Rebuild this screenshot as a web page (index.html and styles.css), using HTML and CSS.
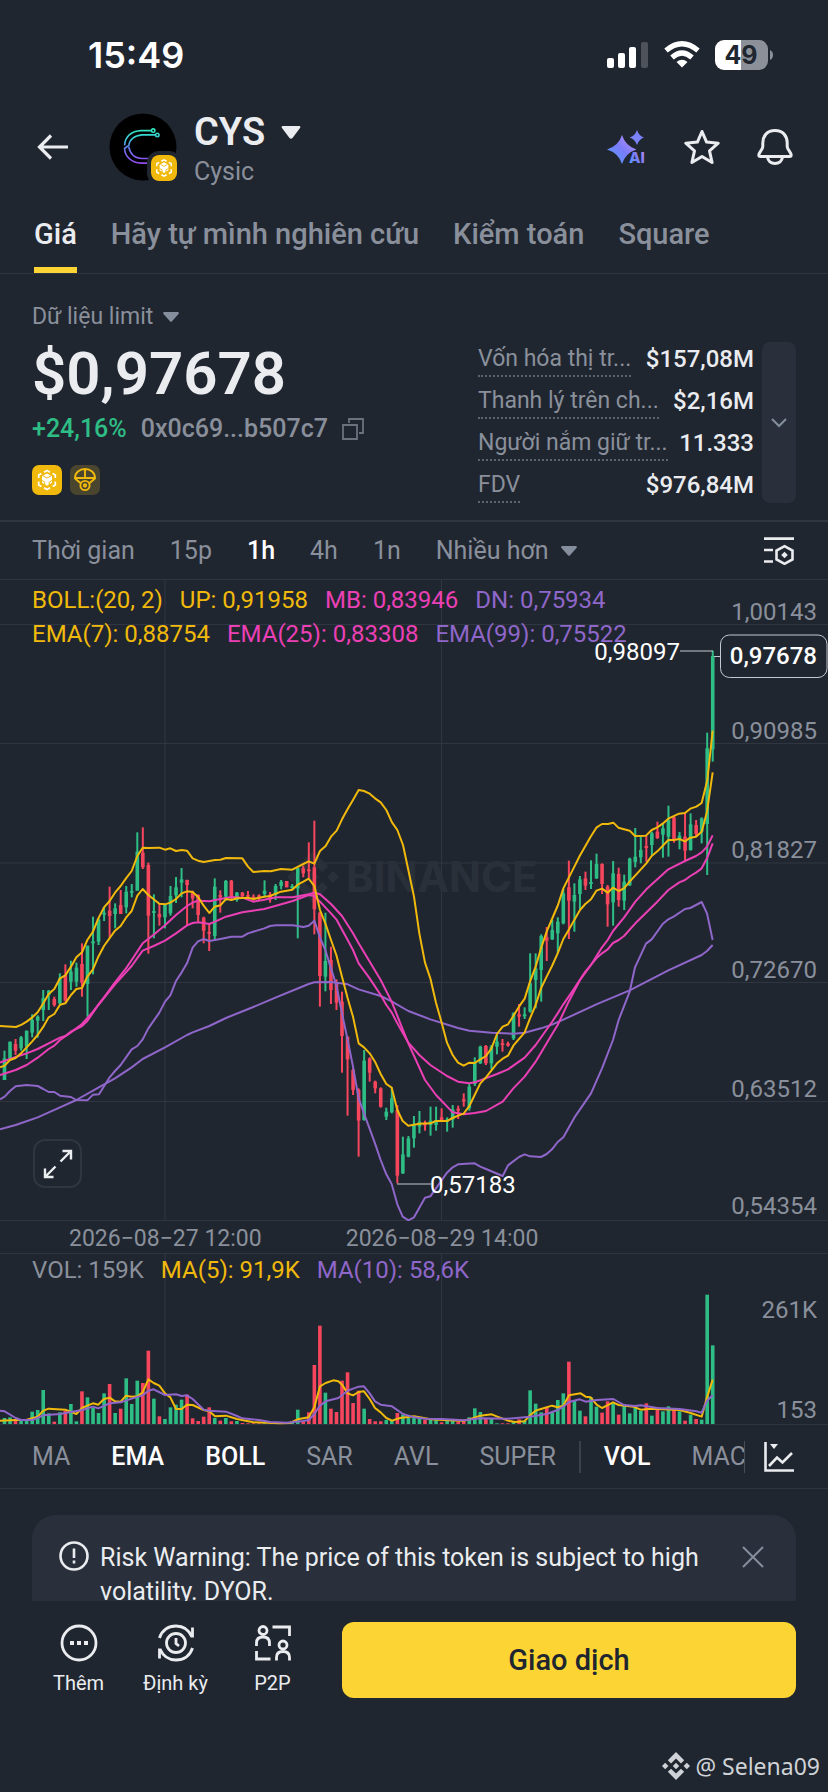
FILE: index.html
```html
<!DOCTYPE html>
<html lang="vi">
<head>
  <meta charset="UTF-8" />
  <meta name="viewport" content="width=device-width, initial-scale=1" />
  <title>CYS - Cysic</title>
  <link rel="stylesheet" href="styles.css">
</head>
<body>
  <!-- shared icon shapes -->
  <svg class="defs" aria-hidden="true">
    <symbol id="bnb" viewBox="0 0 30 30">
      <rect width="30" height="30" rx="7" fill="#f0b90b" />
      <path d="M12 7.200 15 5.500l3 1.700M20.600 8.500l2.700 1.600v3M23.300 16.500v3.400l-2.700 1.600M18 22.800l-3 1.700-3-1.700M9.400 21.500l-2.700-1.600v-3.400M6.700 13.100v-3l2.700-1.600" fill="none" stroke="#fff" stroke-width="1.700" />
      <path d="M10 11.200 15 8.400l5 2.800v6.500l-5 3-5-3z" fill="#fff" />
      <path d="M11 10.800l4 2.300 4-2.300M10 15.500l2.800 1.600v3.200M20 15.500l-2.800 1.600v3.200" fill="none" stroke="#f0b90b" stroke-width="1" />
    </symbol>
    <symbol id="binance" viewBox="0 0 48 48">
      <path d="M24 0 38 14l-5.500 5.500L24 11l-8.500 8.500L10 14zM24 48 10 34l5.500-5.500L24 37l8.500-8.500L38 34zM24 18.500l5.500 5.500-5.500 5.500-5.500-5.500zM5.500 18.500 11 24l-5.500 5.500L0 24zM42.500 18.500 48 24l-5.500 5.500L37 24z" fill="currentColor" />
    </symbol>
  </svg>

  <div class="status-bar">
    <time>15:49</time>
    <div class="status-icons">
      <svg width="42" height="28" viewBox="0 0 42 28" fill="#fff">
        <rect x="0" y="17" width="7" height="10" rx="2" />
        <rect x="11" y="12" width="7" height="15" rx="2" />
        <rect x="22" y="6" width="7" height="21" rx="2" />
        <rect x="34" y="1" width="7" height="26" rx="2" fill="#4d525b" />
      </svg>
      <svg width="36" height="28" viewBox="0 0 36 28" fill="none" stroke="#fff" stroke-width="5.200">
        <path d="M2 9.500Q18-4 34 9.500" />
        <path d="M8 16.500Q18 7.500 28 16.500" />
        <path d="M12.500 21Q18 16.500 23.500 21L18 26.500z" fill="#fff" stroke="none" />
      </svg>
      <svg width="58" height="30" viewBox="0 0 58 30">
        <path d="M9 0h17v30H9a9 9 0 0 1-9-9V9a9 9 0 0 1 9-9z" fill="#fff" />
        <path d="M26 0h18a9 9 0 0 1 9 9v12a9 9 0 0 1-9 9H26z" fill="#8b9099" />
        <path d="M55 10q3 1.500 3 5t-3 5z" fill="#8b9099" />
        <text x="26" y="24" class="battery-text">49</text>
      </svg>
    </div>
  </div>

  <header class="top">
    <button class="icon-btn" aria-label="Quay lại">
      <svg width="32" height="26" viewBox="0 0 32 26" fill="none" stroke="#eaecef" stroke-width="3.200">
        <path d="M32 13H3M15 1.500 3.500 13 15 24.500" />
      </svg>
    </button>
    <div class="coin-logo">
      <svg width="68" height="68" viewBox="0 0 68 68">
        <defs>
          <linearGradient id="cy" x1="0" y1="16" x2="0" y2="52" gradientUnits="userSpaceOnUse">
            <stop offset="0" stop-color="#2fe6bd" />
            <stop offset=".3" stop-color="#3fc8dc" />
            <stop offset=".55" stop-color="#6a74f0" />
            <stop offset="1" stop-color="#9a45f0" />
          </linearGradient>
        </defs>
        <circle cx="34" cy="34" r="33.500" fill="#000" />
        <g fill="none" stroke="url(#cy)" stroke-width="1.600">
          <path d="M42.500 17.600H32C23 18 16 23 15.600 32.500M46.500 21.900H33C25 22.500 20.500 27 19.800 32.500L15.500 35.500C16 44 23 50 32 50.100H42M19.800 34C21 41 26 45.300 33 45.500H42" />
          <circle cx="44.200" cy="17.600" r="1.700" />
          <circle cx="48.300" cy="21.900" r="1.700" />
        </g>
      </svg>
      <svg class="chain-badge" width="26" height="26"><use href="#bnb" /></svg>
    </div>
    <div class="coin-name">
      <button class="coin-select">CYS
        <svg width="20" height="13" viewBox="0 0 20 13" fill="#eaecef"><path d="M1.500 0h17q1.500.5.500 2l-7.500 10q-1.500 1.500-3 0L1 2Q0 .5 1.500 0z" /></svg>
      </button>
      <span>Cysic</span>
    </div>
    <div class="top-actions">
      <button class="icon-btn" aria-label="Trợ lý AI">
        <svg width="40" height="36" viewBox="0 0 40 36">
          <defs>
            <linearGradient id="ai" x1="0" y1="1" x2="1" y2="0">
              <stop offset="0" stop-color="#4fa3ff" />
              <stop offset=".5" stop-color="#7a7cf8" />
              <stop offset="1" stop-color="#c391f5" />
            </linearGradient>
          </defs>
          <path d="M15 6Q18.500 17 29.500 20.500 18.500 24 15 35 11.500 24 0 20.500 11.500 17 15 6z" fill="url(#ai)" />
          <path d="M30 1Q32 7 37 8.500 32 10 30 16 28 10 22.500 8.500 28 7 30 1z" fill="#7a83f8" />
          <text x="22" y="34" class="ai-text" fill="url(#ai)">AI</text>
        </svg>
      </button>
      <button class="icon-btn" aria-label="Yêu thích">
        <svg width="36" height="36" viewBox="0 0 36 36" fill="none" stroke="#eaecef" stroke-width="3" stroke-linejoin="round">
          <path d="M18 2.500l4.600 10.600 11.600 1.100-8.700 7.700 2.600 11.600L18 27.500 7.900 33.500l2.600-11.600-8.700-7.700 11.600-1.100z" />
        </svg>
      </button>
      <button class="icon-btn" aria-label="Thông báo">
        <svg width="36" height="36" viewBox="0 0 36 36" fill="none" stroke="#eaecef" stroke-width="3" stroke-linejoin="round">
          <path d="M18 1.500C10 1.500 5.800 7 5.800 14v3.500c0 3-4 6-4 8.500 0 1 .7 1.500 1.700 1.500h29c1 0 1.700-.5 1.700-1.500 0-2.500-4-5.500-4-8.500V14c0-7-4.200-12.500-12.200-12.500zM10.500 28c.5 4 3.500 6.500 7.500 6.500s7-2.500 7.500-6.500" />
        </svg>
      </button>
    </div>
  </header>

  <nav class="tabs">
    <a href="#" aria-current="page">Giá</a>
    <a href="#">Hãy tự mình nghiên cứu</a>
    <a href="#">Kiểm toán</a>
    <a href="#">Square</a>
  </nav>

  <main>
    <section class="summary">
      <div class="price-block">
        <button class="data-select">Dữ liệu limit
          <svg width="16" height="10" viewBox="0 0 16 10" fill="#848e9c"><path d="M1 0h14q1.500.5.500 2L9 9.300q-1 1-2 0L.5 2Q-.5.500 1 0z" /></svg>
        </button>
        <h1>$0,97678</h1>
        <div class="change-row">
          <span class="up">+24,16%</span>
          <span class="address">0x0c69...b507c7</span>
          <button class="icon-btn" aria-label="Sao chép">
            <svg width="22" height="22" viewBox="0 0 22 22" fill="none" stroke="#6b727e" stroke-width="1.800">
              <path d="M1 7h14v14H1zM7 5V1h14v14h-4" />
            </svg>
          </button>
        </div>
        <div class="badges">
          <svg width="30" height="30"><use href="#bnb" /></svg>
          <svg width="30" height="30" viewBox="0 0 30 30" fill="none" stroke="#f0b90b" stroke-width="1.900">
            <rect width="30" height="30" rx="7" fill="#4a452e" stroke="none" />
            <path d="M5 13C5 7.500 9.500 4 15 4s10 3.500 10 9zM15 4v9M5 13.500l6 5M25 13.500l-6 5" />
            <circle cx="15" cy="20.500" r="4.600" />
            <circle cx="15" cy="20.500" r="1.200" />
          </svg>
        </div>
      </div>
      <dl class="stats">
        <div><dt>Vốn hóa thị tr...</dt><dd>$157,08M</dd></div>
        <div><dt>Thanh lý trên ch...</dt><dd>$2,16M</dd></div>
        <div><dt>Người nắm giữ tr...</dt><dd>11.333</dd></div>
        <div><dt>FDV</dt><dd>$976,84M</dd></div>
      </dl>
      <button class="expand-stats" aria-label="Mở rộng">
        <svg width="16" height="10" viewBox="0 0 16 10" fill="none" stroke="#848e9c" stroke-width="2"><path d="M1 1l7 7 7-7" /></svg>
      </button>
    </section>

    <div class="intervals">
      <button>Thời gian</button>
      <button>15p</button>
      <button class="active">1h</button>
      <button>4h</button>
      <button>1n</button>
      <button>Nhiều hơn
        <svg width="16" height="10" viewBox="0 0 16 10" fill="#848e9c"><path d="M1 0h14q1.500.5.500 2L9 9.300q-1 1-2 0L.5 2Q-.5.500 1 0z" /></svg>
      </button>
      <button class="settings" aria-label="Cài đặt">
        <svg width="30" height="28" viewBox="0 0 30 28" fill="none" stroke="#eaecef" stroke-width="2.600">
          <path d="M0 1.600h30M0 13h9M0 24.500h9M20.500 9.200l8 4.400v8.800l-8 4.400-8-4.400v-8.800z" />
          <path d="M20.500 14.700l3.300 3.300-3.300 3.300-3.300-3.300z" fill="#eaecef" stroke="none" />
        </svg>
      </button>
    </div>

    <section class="chart">
      <div class="legend">
        <p><span class="y">BOLL:(20, 2)</span><span class="y">UP: 0,91958</span><span class="m">MB: 0,83946</span><span class="p">DN: 0,75934</span></p>
        <p><span class="y">EMA(7): 0,88754</span><span class="m">EMA(25): 0,83308</span><span class="p">EMA(99): 0,75522</span></p>
      </div>
      <svg id="priceChart" viewBox="0 0 828 641">
        <path class="grid" d="M0 44.500H828M0 163.500H828M0 283H828M0 402.500H828M0 521.500H828M0 640.500H828M165 0V640M441.500 0V640" />
        <g class="brand">
          <use href="#binance" x="287" y="271" width="52" height="52" />
          <text x="346" y="312">BINANCE</text>
        </g>
        <g id="candles"></g>
        <g id="priceLines" class="lines"></g>
        <g class="axis">
          <text x="817" y="40">1,00143</text>
          <text x="817" y="159">0,90985</text>
          <text x="817" y="278">0,81827</text>
          <text x="817" y="398">0,72670</text>
          <text x="817" y="517">0,63512</text>
          <text x="817" y="634">0,54354</text>
        </g>
        <g class="marker">
          <path d="M680 71h33M714 76.500h6M397 604h34" />
          <text x="680" y="80" text-anchor="end">0,98097</text>
          <text x="430" y="613">0,57183</text>
          <rect x="720.500" y="55" width="106.500" height="42.500" rx="9" />
          <text x="817" y="84" class="last" text-anchor="end">0,97678</text>
        </g>
      </svg>
      <button class="fullscreen" aria-label="Toàn màn hình">
        <svg width="30" height="30" viewBox="0 0 30 30" fill="none" stroke="#eaecef" stroke-width="2.400">
          <path d="M17.500 12.500 28 2M19.500 2H28v8.500M12.500 17.500 2 28M2 19.500V28h8.500" />
        </svg>
      </button>
    </section>

    <div class="dates">
      <time>2026−08−27 12:00</time>
      <time>2026−08−29 14:00</time>
    </div>

    <section class="chart volume">
      <div class="legend">
        <p><span>VOL: 159K</span><span class="y">MA(5): 91,9K</span><span class="p">MA(10): 58,6K</span></p>
      </div>
      <svg id="volumeChart" viewBox="0 0 828 171">
        <path class="grid" d="M165 0V170M441.500 0V170M0 170.500H828" />
        <g id="bars"></g>
        <g id="volumeLines" class="lines"></g>
        <g class="axis">
          <text x="817" y="64">261K</text>
          <text x="817" y="164">153</text>
        </g>
      </svg>
    </section>

    <div class="indicators">
      <div class="indicator-list">
        <button>MA</button>
        <button class="active">EMA</button>
        <button class="active">BOLL</button>
        <button>SAR</button>
        <button>AVL</button>
        <button>SUPER</button>
        <i></i>
        <button class="active">VOL</button>
        <button>MACD</button>
      </div>
      <button class="settings" aria-label="Chỉ báo">
        <svg width="30" height="30" viewBox="0 0 30 30" fill="none" stroke="#eaecef" stroke-width="2.600">
          <path d="M1.500 0v28.500H30M5 24l8-8.500 5.500 5L28 11" />
          <path d="M6 2h8l-4 5z" fill="#eaecef" stroke="none" />
        </svg>
      </button>
    </div>

    <div class="warning">
      <svg width="30" height="30" viewBox="0 0 30 30" fill="none" stroke="#eaecef" stroke-width="2.600">
        <circle cx="15" cy="15" r="13.500" />
        <path d="M15 7.500v9.500M15 19.500v3" />
      </svg>
      <p>Risk Warning: The price of this token is subject to high volatility. DYOR.</p>
      <button class="icon-btn" aria-label="Đóng">
        <svg width="22" height="22" viewBox="0 0 22 22" stroke="#848e9c" stroke-width="2"><path d="M1 1l20 20M21 1 1 21" /></svg>
      </button>
    </div>
  </main>

  <footer>
    <div class="bottom-bar">
      <button class="action">
        <svg width="38" height="38" viewBox="0 0 38 38" fill="none" stroke="#eaecef" stroke-width="2.800">
          <circle cx="19" cy="19" r="17" />
          <path d="M10 19h4M17 19h4M24 19h4" stroke-width="4" />
        </svg>
        Thêm
      </button>
      <button class="action">
        <svg width="38" height="38" viewBox="0 0 38 38" fill="none" stroke="#eaecef" stroke-width="2.800">
          <circle cx="19" cy="19" r="9.500" />
          <path d="M19 14v5.500l3 2.500M2.500 14C5 6 11.500 2 19 2c7 0 13 4 16 11M35.500 3.500V13.500M35.500 24C33 32 26.500 36 19 36 12 36 6 32 3 25M2.500 34.500V24.500" />
        </svg>
        Định kỳ
      </button>
      <button class="action">
        <svg width="38" height="38" viewBox="0 0 38 38" fill="none" stroke="#eaecef" stroke-width="2.800">
          <circle cx="9" cy="6.500" r="4" />
          <circle cx="29" cy="21" r="4" />
          <path d="M2.500 22v-3c0-4 2.500-6 6.500-6s6.500 2 6.500 6v3M22.500 36.500v-3c0-4 2.500-6 6.500-6s6.500 2 6.500 6v3M18.500 3H35.500V12M2.500 27v8H16.500" />
        </svg>
        P2P
      </button>
      <button class="trade">Giao dịch</button>
    </div>
    <p class="author"><svg width="28" height="28"><use href="#binance" /></svg>@ Selena09</p>
  </footer>

  <script src="chart.js"></script>
</body>
</html>
```

FILE: styles.css
```css
:root {
  --bg: #202630;
  --line: #2f3641;
  --card: #29303b;
  --text: #eaecef;
  --muted: #8a909b;
  --yellow: #f0b90b;
  --pink: #eb40b5;
  --purple: #8f66c9;
  --green: #2ebd85;
  --red: #f6465d;
}
* {
  box-sizing: border-box;
}
body {
  font-family: Roboto, 'Noto Sans', sans-serif;
  font-size: 25px;
  margin: 0;
  height: 100vh;
  background: var(--bg);
  color: var(--text);
  display: flex;
  flex-direction: column;
  overflow: hidden;
}
h1, p, dl, dd {
  margin: 0;
}
svg {
  display: block;
  flex: none;
}
button {
  font: inherit;
  color: inherit;
  background: none;
  border: none;
  padding: 0;
  display: flex;
  align-items: center;
  white-space: nowrap;
  cursor: pointer;
}
.defs {
  position: absolute;
  width: 0;
  height: 0;
}

.status-bar {
  display: flex;
  justify-content: space-between;
  align-items: center;
  height: 110px;
  padding: 0 55px 0 88px;
}
.status-bar time {
  font-family: Inter, sans-serif;
  font-size: 36px;
  font-weight: 600;
  color: #fff;
}
.status-icons {
  display: flex;
  align-items: center;
  gap: 15px;
}
.battery-text {
  font-family: Inter, sans-serif;
  font-size: 25px;
  font-weight: 700;
  text-anchor: middle;
  fill: #202630;
}
.ai-text {
  font-family: Inter, sans-serif;
  font-size: 15px;
  font-weight: 800;
}

.top {
  display: flex;
  align-items: center;
  height: 74px;
  padding: 0 35px 0 36px;
}
.coin-logo {
  position: relative;
  margin: 0 17px 0 41px;
}
.chain-badge {
  position: absolute;
  right: 0;
  bottom: 0;
  border-radius: 8px;
  box-shadow: 0 0 0 4px var(--bg);
}
.coin-name {
  padding-top: 6px;
  color: var(--muted);
}
.coin-select {
  gap: 16px;
  font-size: 38px;
  line-height: 44px;
  font-weight: 600;
  color: var(--text);
}
.coin-name span {
  display: block;
  line-height: 36px;
}
.top-actions {
  display: flex;
  gap: 37px;
  margin-left: auto;
}

.tabs {
  display: flex;
  gap: 34px;
  padding: 0 34px;
  border-bottom: 1px solid var(--line);
}
.tabs a {
  position: relative;
  padding: 32px 0 20px;
  font-size: 29px;
  line-height: 37px;
  font-weight: 500;
  color: var(--muted);
  text-decoration: none;
  white-space: nowrap;
}
.tabs a[aria-current="page"] {
  color: var(--text);
}
.tabs a[aria-current="page"]::after {
  content: "";
  position: absolute;
  left: 0;
  right: 0;
  bottom: 0;
  height: 6px;
  background: #fcd535;
}

main {
  flex: 1;
  min-height: 0;
  overflow: hidden;
}
.summary {
  display: flex;
  padding: 28px 32px 10px;
  border-bottom: 2px solid var(--line);
}
.price-block {
  flex: 1;
}
.data-select {
  gap: 10px;
  font-size: 23px;
  line-height: 30px;
  color: var(--muted);
}
.summary h1 {
  font-size: 60px;
  line-height: 66px;
  margin-top: 9px;
  font-weight: 600;
}
.change-row {
  display: flex;
  align-items: center;
  gap: 14px;
  margin-top: 6px;
  line-height: 32px;
}
.up {
  color: var(--green);
  font-weight: 500;
}
.address {
  color: var(--muted);
  font-weight: 500;
}
.badges {
  display: flex;
  gap: 8px;
  margin-top: 20px;
}
.stats {
  width: 276px;
  margin-top: 40px;
}
.stats div {
  display: flex;
  justify-content: space-between;
  align-items: flex-start;
  height: 42px;
  line-height: 34px;
}
.stats dt {
  font-size: 23px;
  line-height: 33px;
  color: var(--muted);
  border-bottom: 2px dotted #5d646f;
}
.stats dd {
  font-size: 24px;
  font-weight: 500;
}
.expand-stats {
  justify-content: center;
  width: 34px;
  height: 161px;
  margin: 40px 0 0 8px;
  border-radius: 8px;
  background: var(--card);
}

.intervals {
  display: flex;
  align-items: center;
  gap: 35px;
  height: 58px;
  padding: 0 34px 0 32px;
  border-bottom: 1px solid var(--line);
  color: var(--muted);
}
.intervals button {
  gap: 12px;
}
.intervals .settings {
  margin-left: auto;
}
.active {
  color: #fff;
  font-weight: 500;
}

.chart {
  position: relative;
}
.chart > svg {
  width: 100%;
}
.legend {
  position: absolute;
  top: 3px;
  left: 32px;
  font-size: 24px;
  line-height: 34px;
  color: var(--muted);
}
.legend p {
  display: flex;
  gap: 17px;
  white-space: nowrap;
}
.y {
  color: var(--yellow);
}
.m {
  color: var(--pink);
}
.p {
  color: var(--purple);
}
.grid {
  stroke: var(--line);
  fill: none;
}
.brand {
  color: #2a303a;
  fill: #2a303a;
}
.brand text {
  font-family: Inter, sans-serif;
  font-size: 42px;
  font-weight: 700;
}
.axis text {
  font-size: 24px;
  text-anchor: end;
  fill: var(--muted);
}
.marker {
  font-size: 24px;
  fill: #fff;
}
.marker path,
.marker rect {
  fill: none;
  stroke: #c5c8ce;
}
.marker .last {
  font-weight: 500;
}
.lines {
  fill: none;
  stroke-width: 2;
  stroke-linejoin: round;
}
.fullscreen {
  position: absolute;
  left: 33px;
  bottom: 33px;
  width: 49px;
  height: 49px;
  justify-content: center;
  border: 2px solid var(--line);
  border-radius: 12px;
}
.dates {
  display: flex;
  gap: 84px;
  height: 33px;
  padding-left: 69px;
  line-height: 36px;
  font-size: 23px;
  color: var(--muted);
  border-bottom: 1px solid var(--line);
}
.volume .legend {
  top: -1px;
}

.indicators {
  display: flex;
  align-items: center;
  height: 64px;
  padding-right: 34px;
  border-bottom: 1px solid var(--line);
  color: var(--muted);
}
.indicator-list {
  display: flex;
  align-items: center;
  gap: 41px;
  flex: 1;
  min-width: 0;
  height: 32px;
  padding-left: 32px;
  margin-right: 19px;
  overflow: hidden;
  border-right: 1px solid #474d57;
}
.indicator-list i {
  width: 2px;
  height: 32px;
  margin: 0 -18px;
  flex: none;
  background: #3a414d;
}

.warning {
  display: flex;
  align-items: flex-start;
  gap: 11px;
  margin: 26px 32px;
  padding: 26px 32px 26px 27px;
  border-radius: 24px;
  background: var(--card);
  line-height: 34px;
}
.warning p {
  flex: 1;
}
.warning .icon-btn {
  margin: 5px 0 0 10px;
}

.bottom-bar {
  display: flex;
  align-items: center;
  padding: 21px 32px 0 30px;
}
.action {
  flex-direction: column;
  gap: 7px;
  width: 97px;
  font-size: 20px;
  line-height: 28px;
}
.trade {
  flex: 1;
  justify-content: center;
  height: 76px;
  margin-left: 21px;
  border-radius: 12px;
  background: #fcd535;
  color: #202630;
  font-size: 29px;
  font-weight: 500;
}
.author {
  display: flex;
  justify-content: flex-end;
  align-items: center;
  gap: 5px;
  padding: 48px 8px 6px;
  font-family: 'Noto Sans', sans-serif;
  font-size: 23px;
  line-height: 40px;
  color: #cfd2d6;
}
```

FILE: chart.js
```javascript
// Chart data in thirds of a viewBox unit.
// Candle: [high, open/close top, open/close bottom, low, volume, up?]
const candles = [
  [1412, 1435, 1500, 1500, 18, 1], [1385, 1385, 1440, 1442, 20, 1], [1377, 1392, 1412, 1425, 10, 0],
  [1368, 1372, 1405, 1412, 12, 1], [1352, 1352, 1400, 1437, 15, 1], [1303, 1320, 1358, 1372, 37, 1],
  [1306, 1310, 1322, 1373, 42, 1], [1230, 1255, 1290, 1323, 102, 1], [1230, 1232, 1245, 1290, 32, 1],
  [1250, 1257, 1275, 1280, 7, 0], [1180, 1195, 1270, 1272, 35, 1], [1153, 1185, 1262, 1265, 40, 0],
  [1142, 1175, 1205, 1230, 60, 1], [1148, 1163, 1205, 1220, 8, 1], [1090, 1152, 1208, 1250, 98, 0],
  [1097, 1097, 1212, 1310, 80, 1], [1010, 1084, 1090, 1183, 48, 1], [1015, 1018, 1085, 1095, 33, 1],
  [980, 998, 1004, 1023, 92, 1], [920, 992, 1008, 1072, 120, 0], [970, 985, 1002, 1045, 33, 1],
  [930, 975, 1002, 1002, 46, 0], [918, 935, 982, 1000, 137, 1], [912, 933, 938, 952, 60, 1],
  [757, 815, 932, 932, 130, 1], [742, 818, 862, 867, 123, 0], [848, 855, 1007, 1121, 220, 0],
  [943, 993, 999, 1075, 76, 1], [972, 1002, 1012, 1037, 23, 0], [972, 975, 1012, 1045, 15, 1],
  [918, 948, 1000, 1007, 50, 1], [891, 922, 946, 969, 58, 1], [864, 898, 908, 952, 73, 1],
  [899, 900, 915, 1037, 88, 0], [932, 938, 955, 985, 17, 0], [943, 945, 1005, 1025, 9, 0],
  [1010, 1013, 1052, 1090, 22, 0], [1030, 1056, 1061, 1113, 50, 0], [895, 920, 1068, 1082, 18, 1],
  [931, 945, 952, 998, 10, 0], [900, 903, 950, 962, 18, 1], [900, 902, 950, 962, 8, 0],
  [936, 938, 960, 965, 9, 1], [936, 938, 948, 952, 3, 0], [933, 945, 950, 952, 2, 0],
  [943, 950, 955, 962, 2, 0], [943, 946, 955, 962, 2, 0], [901, 932, 942, 950, 2, 1],
  [936, 944, 958, 968, 2, 0], [912, 918, 945, 960, 2, 1], [900, 905, 918, 928, 3, 1],
  [903, 903, 922, 922, 6, 0], [912, 918, 924, 928, 5, 1], [862, 865, 925, 1075, 43, 1],
  [857, 865, 880, 892, 8, 0], [787, 868, 874, 895, 35, 0], [722, 862, 988, 1063, 177, 0],
  [995, 998, 1188, 1280, 295, 0], [998, 1143, 1190, 1234, 94, 1], [1100, 1140, 1230, 1272, 46, 0],
  [1198, 1210, 1268, 1290, 36, 0], [1235, 1265, 1368, 1478, 130, 0], [1370, 1370, 1438, 1607, 155, 0],
  [1465, 1470, 1530, 1545, 63, 0], [1525, 1530, 1622, 1730, 100, 0], [1410, 1442, 1620, 1622, 46, 1],
  [1432, 1435, 1478, 1505, 15, 0], [1502, 1505, 1525, 1540, 8, 0], [1522, 1525, 1580, 1583, 8, 0],
  [1583, 1595, 1610, 1620, 12, 1], [1522, 1555, 1597, 1600, 12, 1], [1575, 1590, 1787, 1810, 33, 0],
  [1670, 1723, 1780, 1782, 28, 1], [1668, 1675, 1730, 1732, 20, 1], [1608, 1635, 1675, 1703, 18, 1],
  [1593, 1625, 1640, 1660, 20, 1], [1622, 1628, 1636, 1652, 12, 0], [1580, 1622, 1635, 1667, 13, 1],
  [1580, 1620, 1635, 1652, 12, 1], [1585, 1612, 1622, 1625, 5, 0], [1612, 1618, 1625, 1655, 12, 1],
  [1575, 1588, 1618, 1643, 10, 1], [1577, 1586, 1592, 1617, 8, 0], [1540, 1558, 1564, 1580, 8, 0],
  [1510, 1520, 1585, 1592, 20, 1], [1432, 1448, 1512, 1518, 47, 1], [1397, 1400, 1450, 1452, 36, 1],
  [1395, 1398, 1450, 1455, 17, 0], [1395, 1400, 1450, 1468, 18, 1], [1365, 1385, 1400, 1423, 2, 1],
  [1377, 1390, 1395, 1415, 2, 0], [1385, 1390, 1397, 1400, 2, 0], [1297, 1300, 1375, 1380, 8, 1],
  [1272, 1303, 1310, 1340, 14, 0], [1282, 1303, 1309, 1317, 10, 1], [1120, 1210, 1295, 1298, 101, 1],
  [1120, 1165, 1200, 1285, 61, 1], [1063, 1068, 1170, 1265, 35, 1], [1041, 1072, 1082, 1143, 50, 0],
  [1020, 1050, 1078, 1080, 35, 1], [1012, 1025, 1060, 1120, 72, 1], [927, 940, 1030, 1033, 92, 1],
  [842, 922, 962, 1077, 187, 0], [910, 945, 965, 1055, 70, 1], [888, 898, 942, 988, 40, 1],
  [875, 895, 917, 930, 23, 0], [841, 906, 912, 927, 80, 1], [821, 852, 895, 897, 52, 1],
  [850, 852, 912, 942, 34, 0], [915, 920, 973, 1040, 68, 0], [843, 880, 967, 1037, 65, 1],
  [863, 882, 960, 980, 28, 0], [884, 905, 962, 990, 60, 1], [833, 836, 916, 918, 32, 1],
  [744, 830, 846, 862, 50, 1], [770, 810, 832, 850, 40, 1], [768, 798, 804, 845, 62, 0],
  [755, 760, 795, 825, 25, 1], [725, 755, 774, 777, 50, 0], [730, 745, 764, 833, 38, 1],
  [677, 720, 770, 830, 53, 1], [708, 712, 780, 788, 42, 0], [756, 767, 780, 808, 38, 1],
  [700, 770, 812, 840, 10, 0], [700, 733, 810, 812, 28, 1], [720, 735, 762, 768, 15, 0],
  [712, 715, 755, 790, 13, 1], [458, 505, 732, 885, 388, 1], [212, 228, 508, 545, 236, 1]
];

const priceLines = [
  // EMA(99)
  ['--purple', '0,1648 47,1635 113,1612 180,1582 229,1560 295,1523 345,1495 395,1462 428,1437 495,1402 561,1365 578,1357 628,1338 678,1314 760,1281 828,1252 926,1212 943,1207 993,1206 1043,1213 1076,1228 1142,1248 1175,1264 1225,1293 1291,1318 1374,1344 1408,1352 1474,1358 1540,1361 1574,1358 1623,1345 1656,1334 1690,1319 1789,1273 1889,1231 2005,1171 2105,1125 2121,1113 2138,1095'],
  // DN
  ['--purple', '0,1558 14,1550 30,1533 47,1519 80,1515 113,1518 130,1527 146,1536 163,1536 180,1547 213,1551 229,1560 262,1561 279,1544 297,1543 329,1492 345,1473 362,1455 395,1408 412,1398 428,1378 445,1345 478,1298 495,1265 511,1246 528,1203 545,1177 561,1150 578,1103 594,1084 611,1077 628,1083 661,1077 694,1070 727,1070 744,1060 793,1045 810,1038 828,1036 878,1036 910,1041 926,1037 943,1022 960,1073 976,1110 993,1165 1009,1215 1026,1300 1043,1380 1059,1460 1076,1555 1092,1600 1125,1690 1142,1740 1159,1783 1175,1812 1192,1873 1208,1910 1225,1921 1242,1912 1275,1853 1291,1849 1308,1825 1341,1778 1358,1762 1374,1753 1424,1750 1441,1760 1458,1767 1508,1788 1524,1756 1557,1731 1574,1723 1590,1729 1623,1731 1640,1722 1656,1708 1673,1686 1690,1672 1723,1613 1773,1540 1806,1465 1839,1380 1856,1320 1889,1235 1905,1162 1938,1091 1955,1078 1988,1032 2005,1018 2021,1010 2055,987 2071,984 2105,966 2121,1000 2138,1080'],
  // EMA(25)
  ['--pink', '0,1448 47,1431 80,1420 113,1407 180,1373 196,1368 213,1355 246,1338 262,1323 295,1275 345,1213 395,1158 428,1112 461,1098 495,1082 528,1060 561,1036 578,1029 594,1027 611,1029 628,1032 645,1025 678,1010 727,997 793,987 828,977 878,963 926,945 943,948 960,965 993,1000 1009,1018 1043,1080 1059,1110 1076,1150 1109,1195 1142,1245 1159,1275 1175,1297 1192,1330 1225,1388 1258,1425 1291,1455 1341,1488 1374,1505 1408,1510 1424,1507 1491,1482 1524,1468 1574,1433 1607,1395 1656,1326 1673,1300 1690,1273 1723,1225 1756,1175 1789,1135 1806,1120 1823,1108 1839,1089 1856,1080 1872,1068 1906,1030 1972,965 2005,930 2038,907 2055,900 2071,888 2088,878 2105,865 2121,835 2138,790'],
  // MB
  ['--pink', '0,1485 47,1470 80,1455 113,1433 146,1407 163,1397 180,1380 213,1357 246,1332 279,1295 312,1252 345,1207 378,1165 395,1140 428,1090 461,1064 495,1036 528,1005 561,978 578,968 594,962 628,964 661,957 694,951 727,953 760,965 793,959 828,952 878,952 926,943 943,938 960,943 993,972 1026,1008 1059,1060 1076,1090 1142,1200 1175,1265 1225,1390 1275,1500 1308,1545 1358,1597 1391,1603 1424,1599 1458,1593 1508,1565 1540,1525 1574,1490 1607,1445 1656,1363 1673,1335 1706,1265 1740,1200 1773,1155 1806,1102 1823,1080 1839,1053 1872,1013 1906,965 1939,928 2005,868 2055,843 2088,828 2105,817 2121,800 2138,766'],
  // EMA(7)
  ['--yellow', '0,1462 14,1457 30,1440 47,1434 63,1420 80,1402 96,1385 113,1365 130,1340 146,1312 163,1302 180,1274 196,1270 213,1245 229,1227 246,1224 262,1190 279,1168 295,1130 312,1098 345,1052 362,1038 378,1013 395,993 412,947 428,927 445,945 478,971 495,973 511,968 528,957 545,940 561,934 578,936 594,951 611,977 628,999 644,980 661,976 678,957 694,960 711,955 744,953 760,957 793,950 810,948 843,935 877,929 893,914 910,905 926,896 943,918 960,990 976,1030 993,1080 1009,1125 1026,1190 1043,1255 1059,1310 1076,1390 1092,1402 1109,1420 1125,1445 1142,1482 1159,1512 1175,1523 1192,1590 1208,1623 1225,1637 1258,1631 1291,1630 1308,1623 1341,1623 1358,1614 1374,1607 1391,1601 1408,1578 1424,1545 1441,1510 1458,1492 1491,1450 1508,1436 1524,1427 1540,1397 1574,1357 1590,1315 1607,1275 1623,1225 1640,1190 1656,1158 1673,1120 1690,1077 1706,1050 1740,990 1756,972 1773,958 1789,932 1806,926 1823,938 1839,923 1856,933 1872,925 1889,905 1939,850 1955,828 1972,814 2005,780 2022,780 2038,777 2055,784 2071,773 2088,770 2105,755 2121,695 2138,577'],
  // UP
  ['--yellow', '0,1338 48,1341 65,1334 80,1325 97,1312 113,1297 130,1270 146,1242 163,1227 180,1195 196,1186 213,1160 229,1132 246,1117 262,1080 279,1055 295,1015 312,982 329,963 345,938 362,918 378,895 395,873 412,828 428,803 445,804 478,803 495,809 511,805 528,813 545,810 561,812 578,835 594,842 611,846 645,840 661,839 678,834 727,835 744,860 760,876 793,873 812,874 843,867 877,869 910,852 926,844 943,851 960,813 977,798 993,770 1010,752 1026,718 1043,687 1059,660 1076,630 1092,633 1109,641 1125,655 1142,667 1159,690 1176,727 1192,750 1209,795 1225,870 1242,950 1258,1060 1275,1148 1291,1195 1308,1268 1325,1328 1341,1388 1358,1425 1374,1448 1391,1457 1408,1448 1424,1449 1441,1438 1458,1428 1474,1406 1491,1362 1508,1340 1524,1333 1540,1308 1557,1280 1574,1256 1590,1205 1607,1160 1623,1105 1640,1055 1656,1017 1674,975 1690,925 1722,862 1739,828 1772,770 1790,742 1806,732 1824,732 1840,728 1855,743 1889,752 1905,768 1938,767 1955,750 1972,742 1988,731 2005,716 2037,701 2055,699 2071,686 2089,680 2105,669 2122,600 2138,452']
];

// y is the height above the base line
const volumeLines = [
  ['--yellow', '0,10 47,12 80,13 113,22 130,40 146,46 196,43 229,30 246,48 262,55 279,62 295,58 312,75 329,79 345,68 362,67 378,85 395,82 412,83 428,95 445,134 461,123 478,115 495,92 511,80 528,45 545,45 561,58 578,57 611,42 628,38 645,23 678,25 711,15 760,5 840,2 870,3 893,14 926,20 943,50 960,113 977,123 1000,131 1015,128 1026,118 1043,92 1059,86 1076,96 1092,98 1109,75 1125,48 1142,35 1159,18 1176,10 1200,18 1242,23 1292,14 1342,11 1392,10 1408,14 1441,25 1475,29 1492,22 1524,10 1545,6 1573,8 1590,26 1607,40 1623,45 1656,55 1673,50 1690,55 1707,86 1742,92 1757,82 1772,80 1790,58 1806,48 1822,56 1839,65 1856,57 1900,52 1922,43 1955,46 2039,42 2072,33 2105,22 2121,80 2138,133'],
  ['--purple', '0,40 14,38 47,18 63,12 97,12 130,26 180,30 246,42 279,52 295,47 329,62 362,65 395,76 428,86 445,100 461,104 495,87 528,89 545,84 561,86 578,75 611,43 628,40 678,37 711,24 727,17 777,12 810,6 860,4 910,9 926,12 943,30 960,55 977,68 1015,78 1043,100 1076,112 1092,113 1109,92 1125,68 1142,58 1176,53 1209,30 1242,20 1275,16 1325,15 1392,11 1441,17 1524,16 1590,22 1640,30 1673,42 1690,52 1707,66 1739,74 1757,67 1790,72 1840,75 1872,57 1905,54 1922,56 1972,48 2039,45 2089,38 2105,34 2121,70 2138,86']
];

const BASE = 170;
const STEP = 5.533;

function rect(x, y, w, h, up) {
  return `<rect x="${x - w / 2}" y="${y}" width="${w}" height="${h}" fill="var(${up ? '--green' : '--red'})" />`;
}

function line([color, points], toY) {
  const scaled = points.split(' ').map(p => {
    const [x, y] = p.split(',').map(Number);
    return `${x / 3},${toY(y / 3)}`;
  });
  return `<polyline points="${scaled.join(' ')}" stroke="var(${color})" />`;
}

let bodies = '';
let bars = '';
candles.forEach(([high, top, bottom, low, volume, up], i) => {
  const x = 4.5 + i * STEP;
  bodies += rect(x, high / 3, 2, (low - high) / 3, up);
  bodies += rect(x, top / 3, 3.6, (bottom - top) / 3, up);
  bars += rect(x, BASE - volume / 3, 3.6, volume / 3, up);
});

document.getElementById('candles').innerHTML = bodies;
document.getElementById('bars').innerHTML = bars;
document.getElementById('priceLines').innerHTML = priceLines.map(l => line(l, y => y)).join('');
document.getElementById('volumeLines').innerHTML = volumeLines.map(l => line(l, y => BASE - y)).join('');
```
